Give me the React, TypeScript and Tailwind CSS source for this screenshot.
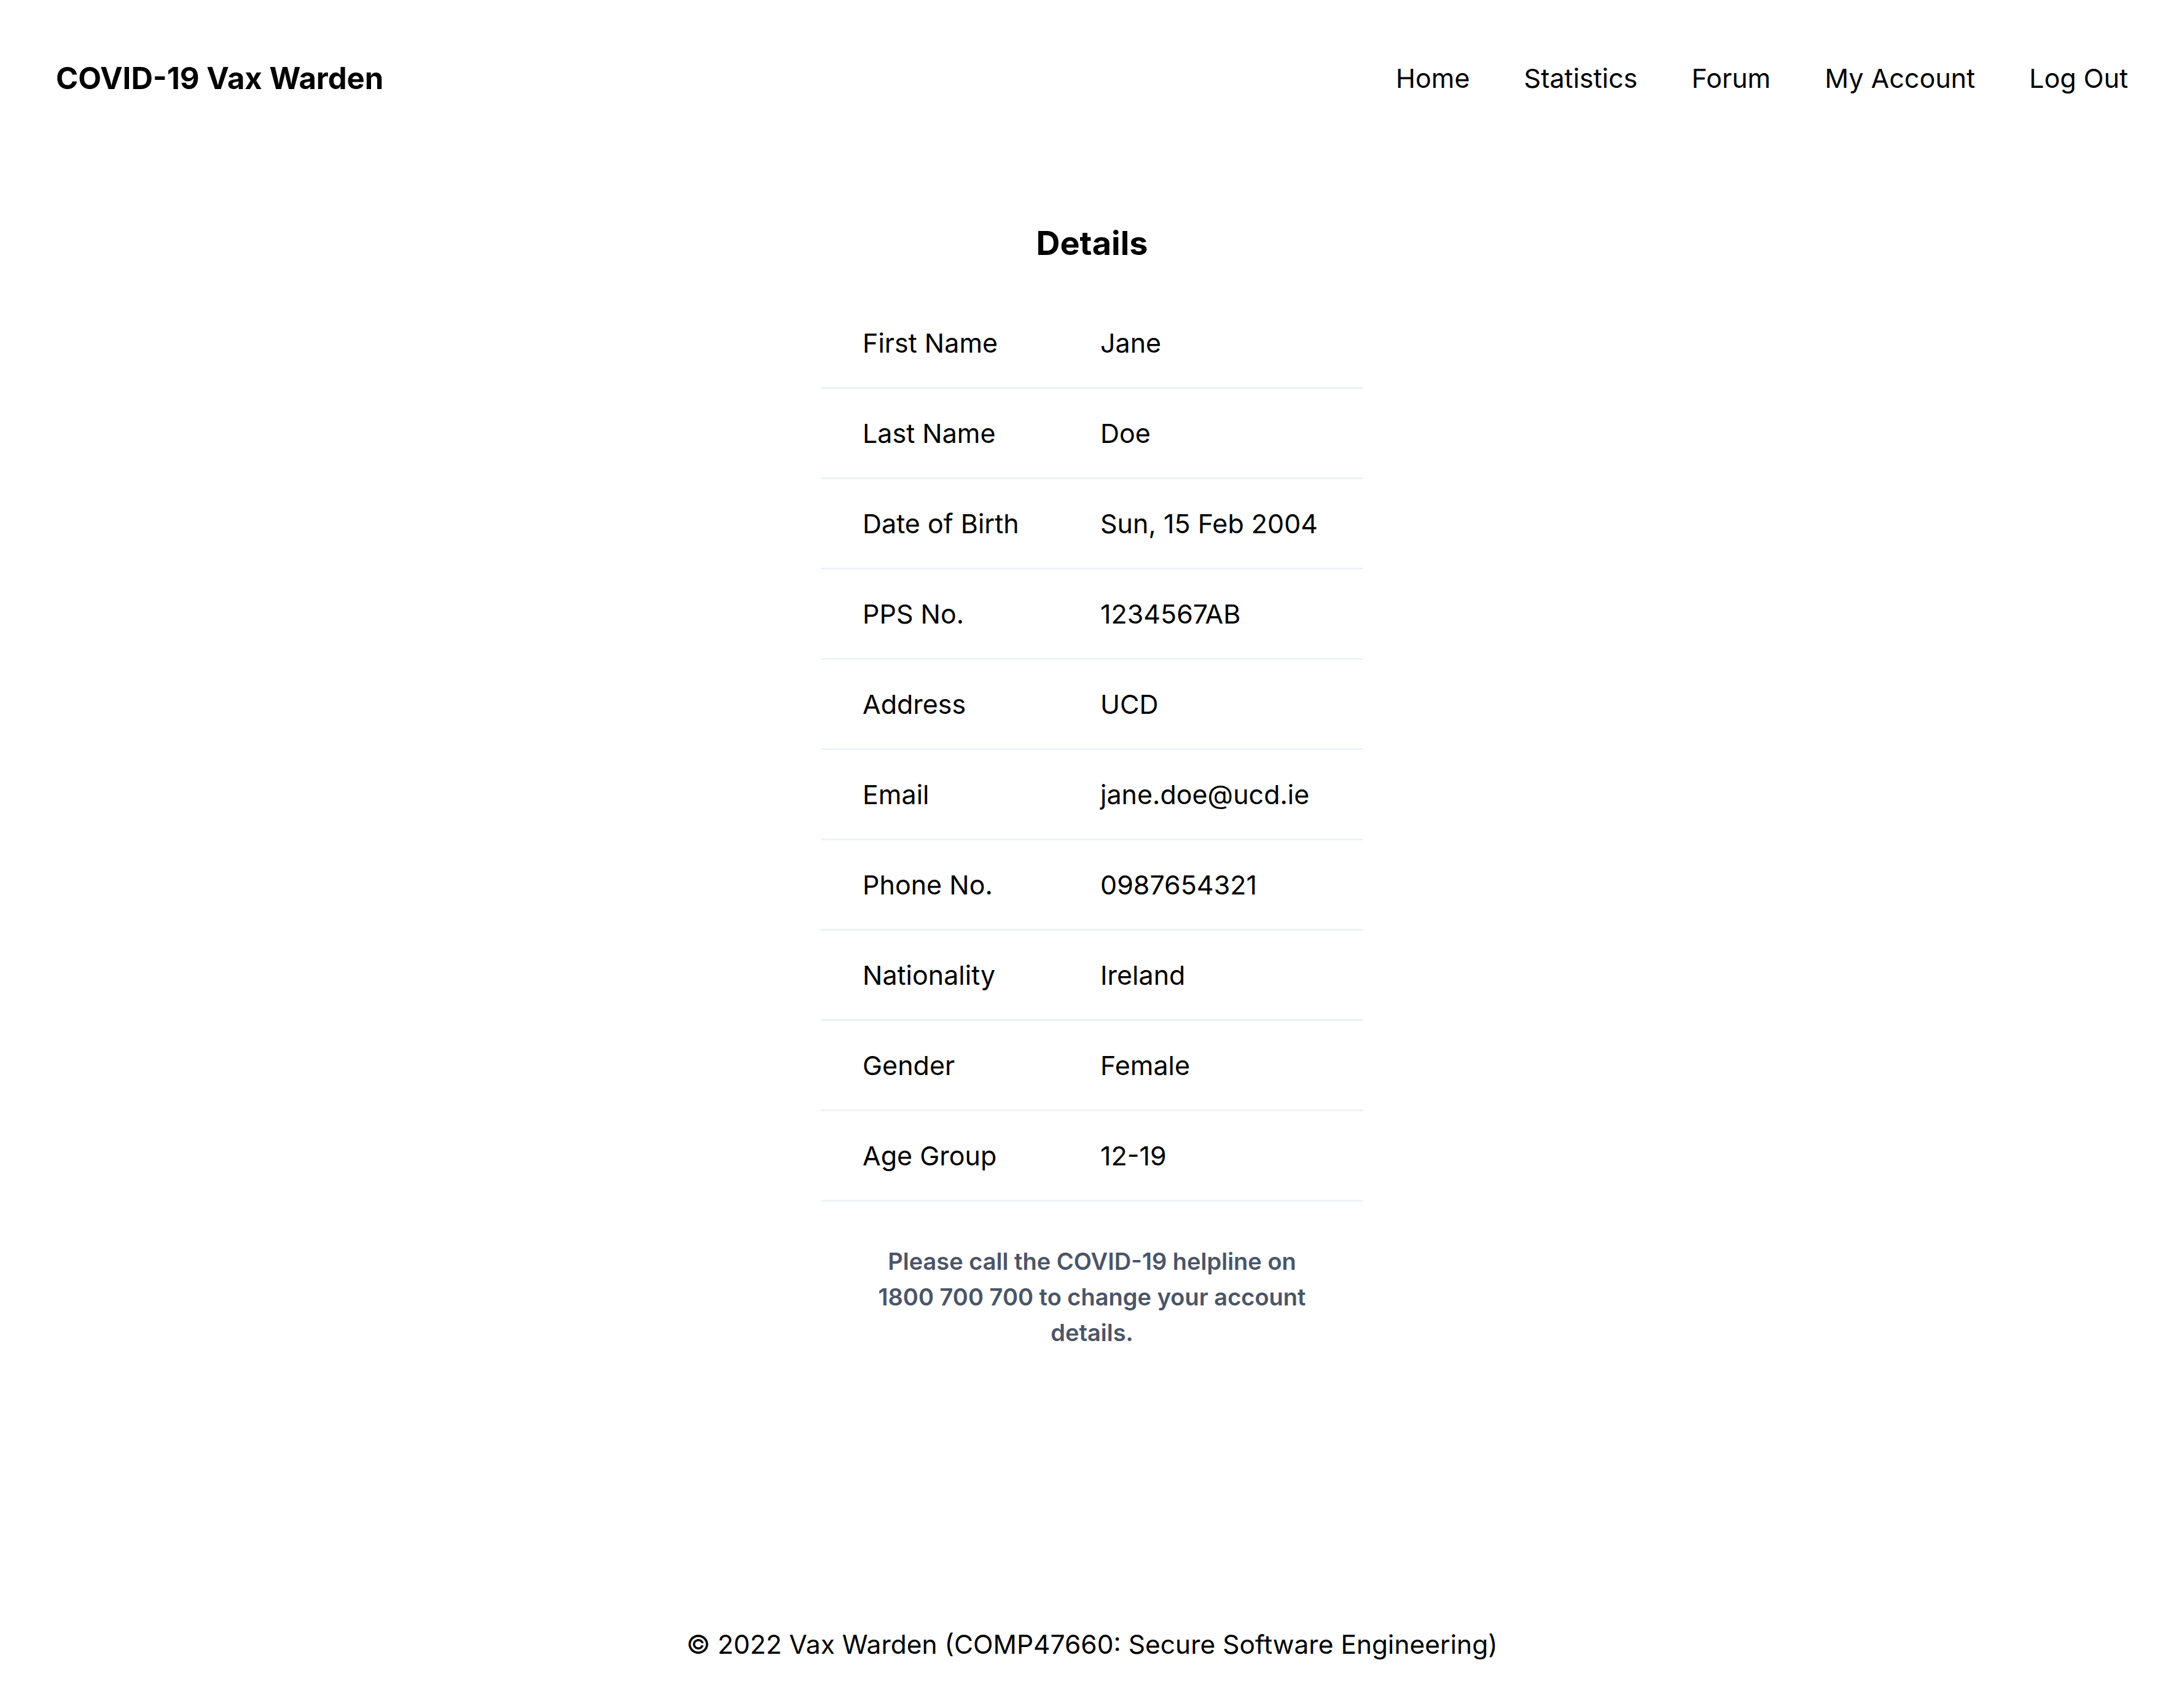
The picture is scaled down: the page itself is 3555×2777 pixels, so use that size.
const rows: [string, string][] = [
  ["First Name", "Jane"],
  ["Last Name", "Doe"],
  ["Date of Birth", "Sun, 15 Feb 2004"],
  ["PPS No.", "1234567AB"],
  ["Address", "UCD"],
  ["Email", "jane.doe@ucd.ie"],
  ["Phone No.", "0987654321"],
  ["Nationality", "Ireland"],
  ["Gender", "Female"],
  ["Age Group", "12-19"],
];

const navLinks = ["Home", "Statistics", "Forum", "My Account", "Log Out"];

export default function App() {
  return (
    <div className="flex min-h-screen flex-col bg-white text-black font-['Inter','Liberation_Sans',sans-serif]">
      {/* Header */}
      <header className="flex h-[254px] items-center justify-between px-[91px]">
        <h1 className="text-[49px] font-bold leading-none">COVID-19 Vax Warden</h1>
        <nav className="flex items-center gap-[88px] text-[43px] leading-none">
          {navLinks.map((l) => (
            <a key={l} href="#" className="hover:underline">
              {l}
            </a>
          ))}
        </nav>
      </header>

      {/* Details */}
      <main className="flex flex-1 flex-col items-center pt-[106px]">
        <h2 className="text-[54px] font-bold leading-[72px]">Details</h2>

        <div className="mt-[54px] grid w-[883px] grid-cols-[387px_496px] text-[43px]">
          {rows.map(([label, value]) => (
            <div key={label} className="contents">
              <div className="flex h-[147px] items-center border-b-[3px] border-[#edf2f7] pl-[68px]">{label}</div>
              <div className="flex h-[147px] items-center border-b-[3px] border-[#edf2f7] pl-[68px]">{value}</div>
            </div>
          ))}
        </div>

        <p className="mt-[68px] w-[725px] text-center text-[38px] font-semibold leading-[58px] text-[#4a5568]">
          Please call the COVID-19 helpline on 1800 700 700 to change your account details.
        </p>
      </main>

      {/* Footer */}
      <footer className="pb-[68px] text-center text-[42.5px] leading-[64px]">
        © 2022 Vax Warden (COMP47660: Secure Software Engineering)
      </footer>
    </div>
  );
}
